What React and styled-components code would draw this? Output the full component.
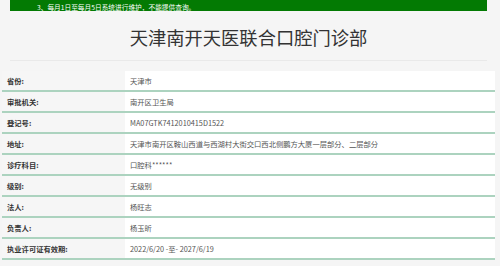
import React from "react";
import styled, { createGlobalStyle } from "styled-components";

const Global = createGlobalStyle`
  html, body { margin: 0; padding: 0; background: #f5f5f5; }
  body { font-family: "Noto Sans CJK SC", "Noto Sans", sans-serif; overflow: hidden; }
`;

const Page = styled.div`
  width: 500px;
  height: 266px;
  display: flex;
  flex-direction: column;
  background: #f5f5f5;
`;

const Notice = styled.div`
  margin: 0 13px 0 10px;
  height: 11px;
  background: #037a03;
  color: #ffffff;
  font-size: 6.7px;
  line-height: 8px;
  padding-left: 27px;
  display: flex;
  align-items: flex-end;
  overflow: hidden;
  white-space: nowrap;
`;

const Heading = styled.h1`
  margin: 0 13px 0 10px;
  height: 50px;
  border-bottom: 1px solid #e9e9e9;
  display: flex;
  align-items: center;
  justify-content: center;
  padding-top: 2px;
  box-sizing: border-box;
  font-size: 18.3px;
  font-weight: 400;
  color: #333333;
`;

const Table = styled.div`
  margin: 10px 5px 0 2px;
  background: #ffffff;
  display: grid;
  grid-template-columns: 123px 1fr;
`;

const Cell = styled.div`
  height: 19px;
  border-bottom: 2px solid #acd3bf;
  display: flex;
  align-items: center;
  padding-left: ${(p) => (p.$label ? "5px" : "5px")};
  background: ${(p) => (p.$label ? "#f6f6f6" : "#ffffff")};
  color: ${(p) => (p.$label ? "#333333" : "#555555")};
  font-weight: ${(p) => (p.$label ? 700 : 400)};
  font-size: 7.3px;
  white-space: nowrap;
`;

const rows = [
  ["省份:", "天津市"],
  ["审批机关:", "南开区卫生局"],
  ["登记号:", "MA07GTK7412010415D1522"],
  ["地址:", "天津市南开区鞍山西道与西湖村大街交口西北侧鹏方大厦一层部分、二层部分"],
  ["诊疗科目:", "口腔科******"],
  ["级别:", "无级别"],
  ["法人:", "杨旺志"],
  ["负责人:", "杨玉昕"],
  ["执业许可证有效期:", "2022/6/20 -至- 2027/6/19"],
];

export default function App() {
  return (
    <Page>
      <Global />
      <Notice>3、每月1日至每月5日系统进行维护，不能提供查询。</Notice>
      <Heading>天津南开天医联合口腔门诊部</Heading>
      <Table>
        {rows.map(([k, v]) => (
          <React.Fragment key={k}>
            <Cell $label>{k}</Cell>
            <Cell>{v}</Cell>
          </React.Fragment>
        ))}
      </Table>
    </Page>
  );
}
